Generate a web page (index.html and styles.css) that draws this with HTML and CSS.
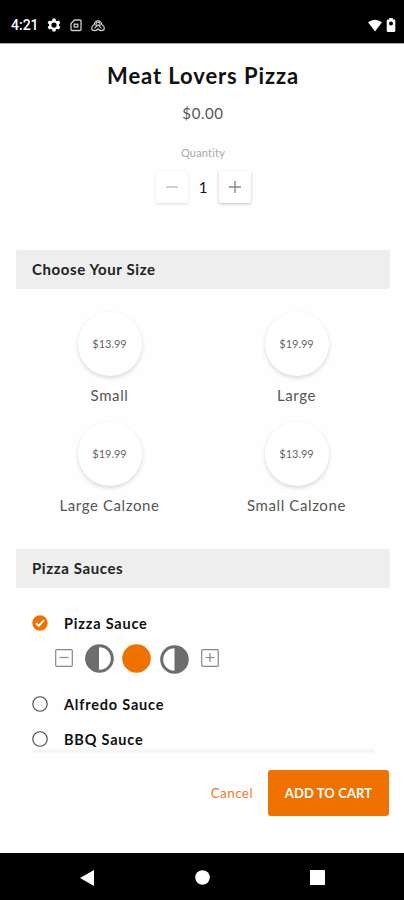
FILE: index.html
```html
<!DOCTYPE html>
<html lang="en">
<head>
    <meta charset="UTF-8">
    <meta name="viewport" content="width=device-width, initial-scale=1.0">
    <title>Meat Lovers Pizza</title>
    <link rel="stylesheet" href="styles.css">
</head>
<body>
    <div class="statusbar">
        <span class="time">4:21</span>
        <svg class="gear" width="14" height="14" viewBox="0 0 24 24"><path fill="#fff" fill-rule="evenodd" d="M9.500 1h5l.6 3.200 2.200 1.300 3.100-1.100 2.500 4.300-2.500 2.100v2.400l2.500 2.100-2.500 4.300-3.100-1.100-2.200 1.300-.6 3.200h-5l-.6-3.200-2.200-1.300-3.100 1.100-2.500-4.300 2.500-2.100v-2.400L1.100 8.700l2.500-4.300 3.100 1.100 2.200-1.300zM12 7.500a4.500 4.500 0 1 0 0 9 4.500 4.500 0 0 0 0-9z"/></svg>
        <svg class="card" width="12" height="13" viewBox="0 0 12 13" fill="none" stroke="#ccc" stroke-width="1.300"><path d="M4.500 1H10q1 0 1 1v8.500q0 1-1 1H2q-1 0-1-1V4.500z"/><rect x="4.200" y="5.200" width="3.600" height="2.800"/></svg>
        <svg class="cast" width="14" height="13" viewBox="0 0 14 13" fill="none" stroke="#ccc" stroke-width="1.200"><path d="M3.300 5.500a3.700 3.700 0 0 1 7.400 0q2.600 1.300 2.600 3.600 0 2.600-2.800 2.600-2 0-3.500-1.700-1.500 1.700-3.500 1.700Q.7 11.700.7 9.100q0-2.300 2.600-3.600z"/><path d="M5 7V5.200a2 2 0 0 1 4 0V7M3.500 9.300L7 5.800l3.500 3.500"/></svg>
        <svg class="wifi" width="16" height="13" viewBox="0 0 16 13"><path fill="#fff" d="M1 3.300Q8-1.800 15 3.300L8 12.500z"/></svg>
        <svg class="battery" width="10" height="14" viewBox="0 0 10 14"><path fill="#fff" fill-rule="evenodd" d="M3.200 0h3.600v1.500H8q1.300 0 1.300 1.300v9.900Q9.300 14 8 14H2Q.7 14 .7 12.700V2.800Q.7 1.500 2 1.500h1.200zM5 3.400a2 2 0 1 0 0 4 2 2 0 0 0 0-4z"/></svg>
    </div>

    <div class="content">
        <h1 class="title">Meat Lovers Pizza</h1>
        <p class="price">$0.00</p>
        <p class="quantity-label">Quantity</p>
        <div class="stepper">
            <button class="step step-off"><svg width="12" height="12" viewBox="0 0 12 12"><path d="M0 6h12"/></svg></button>
            <span class="count">1</span>
            <button class="step"><svg width="12" height="12" viewBox="0 0 12 12"><path d="M0 6h12M6 0v12"/></svg></button>
        </div>

        <h2 class="section">Choose Your Size</h2>
        <div class="sizes">
            <div class="size"><span class="circle">$13.99</span><span class="size-name">Small</span></div>
            <div class="size"><span class="circle">$19.99</span><span class="size-name">Large</span></div>
            <div class="size"><span class="circle">$19.99</span><span class="size-name">Large Calzone</span></div>
            <div class="size"><span class="circle">$13.99</span><span class="size-name">Small Calzone</span></div>
        </div>

        <h2 class="section sauces-head">Pizza Sauces</h2>
        <div class="sauces">
            <div class="sauce">
                <svg width="16" height="16" viewBox="0 0 16 16"><circle cx="8" cy="8" r="7.700" fill="#ef7100"/><path d="M4 8.200l2.800 2.700 5.200-5.700" fill="none" stroke="#fff" stroke-width="2"/></svg>
                <span class="sauce-name">Pizza Sauce</span>
            </div>
            <div class="portions">
                <svg width="18" height="18" viewBox="0 0 18 18"><rect class="box" x=".7" y=".7" width="16.600" height="16.600" rx="1"/><path class="box" d="M4.500 8.500h9"/></svg>
                <svg class="left" width="29" height="29" viewBox="0 0 29 29"><circle cx="14.500" cy="14.500" r="12.800" fill="#fff" stroke="#6d6d6d" stroke-width="3"/><path d="M14 1a13.500 13.500 0 0 0 0 27z" fill="#6d6d6d"/></svg>
                <svg class="whole" width="29" height="29" viewBox="0 0 29 29"><circle cx="14.500" cy="14.500" r="14.300" fill="#ef7100"/></svg>
                <svg class="right" width="29" height="29" viewBox="0 0 29 29"><circle cx="14.500" cy="14.500" r="12.800" fill="#fff" stroke="#6d6d6d" stroke-width="3"/><path d="M14.500 1a13.500 13.500 0 0 1 0 27z" fill="#6d6d6d"/></svg>
                <svg width="18" height="18" viewBox="0 0 18 18"><rect class="box" x=".7" y=".7" width="16.600" height="16.600" rx="1"/><path class="box" d="M4.500 8.500h9M9 4v9"/></svg>
            </div>
            <div class="sauce">
                <svg width="16" height="16" viewBox="0 0 16 16"><circle class="radio" cx="8" cy="8" r="7.200"/></svg>
                <span class="sauce-name">Alfredo Sauce</span>
            </div>
            <div class="sauce">
                <svg width="16" height="16" viewBox="0 0 16 16"><circle class="radio" cx="8" cy="8" r="7.200"/></svg>
                <span class="sauce-name">BBQ Sauce</span>
            </div>
        </div>
    </div>

    <div class="footer">
        <div class="fade"></div>
        <div class="actions">
            <button class="cancel">Cancel</button>
            <button class="add">ADD TO CART</button>
        </div>
    </div>

    <div class="navbar">
        <svg width="14" height="16" viewBox="0 0 14 16"><path fill="#fff" d="M0 8L14 0v16z"/></svg>
        <svg width="15" height="15" viewBox="0 0 15 15"><circle cx="7.500" cy="7.500" r="7.300" fill="#fff"/></svg>
        <svg width="15" height="15" viewBox="0 0 15 15"><rect width="15" height="15" rx=".5" fill="#fff"/></svg>
    </div>
</body>
</html>
```
FILE: styles.css
```css
* {
    box-sizing: border-box;
}
body {
    margin: 0;
    height: 900px;
    display: flex;
    flex-direction: column;
    overflow: hidden;
    background: #fefefe;
    font-family: Lato, "Open Sans", sans-serif;
    color: #111;
}
svg {
    display: block;
    flex: none;
}
button {
    font-family: inherit;
    border: none;
    padding: 0;
    cursor: pointer;
}
.statusbar {
    height: 43px;
    flex: none;
    display: flex;
    align-items: center;
    padding: 7px 8px 0 11px;
    background: #000;
    box-shadow: 0 1px 0 #aaa;
}
.time {
    width: 36px;
    font-family: Roboto, sans-serif;
    font-size: 14px;
    font-weight: 500;
    color: #fff;
}
.card {
    margin-left: 9px;
}
.cast {
    margin-left: 9px;
}
.wifi {
    margin-left: auto;
}
.battery {
    margin-left: 3px;
}
.content {
    height: 706px;
    flex: none;
    padding: 19px 14px 0 16px;
    overflow: hidden;
}
.title {
    margin: 0;
    font-size: 22px;
    line-height: 28px;
    font-weight: 700;
    letter-spacing: 0.9px;
    text-align: center;
}
.price {
    margin: 13px 0 0;
    font-size: 15px;
    line-height: 20px;
    letter-spacing: 0.6px;
    text-align: center;
    color: #555;
}
.quantity-label {
    margin: 22px 0 0;
    font-size: 11px;
    line-height: 16px;
    letter-spacing: 0.2px;
    text-align: center;
    color: #aaa;
}
.stepper {
    display: flex;
    justify-content: center;
    align-items: center;
    margin-top: 10px;
}
.step {
    width: 32px;
    height: 32px;
    display: flex;
    align-items: center;
    justify-content: center;
    background: #fff;
    border-radius: 2px;
    box-shadow: 0 1px 3px rgba(0, 0, 0, 0.25);
}
.step path {
    stroke: #888;
    stroke-width: 1.4;
}
.step-off {
    box-shadow: 0 1px 3px rgba(0, 0, 0, 0.13);
}
.step-off path {
    stroke: #bbb;
}
.count {
    width: 31px;
    font-size: 15px;
    text-align: center;
}
.section {
    height: 39px;
    margin: 47px 0 0;
    padding-left: 16px;
    font-size: 15px;
    line-height: 39px;
    letter-spacing: 0.6px;
    font-weight: 700;
    color: #222;
    background: #eee;
    border-radius: 2px;
}
.sizes {
    display: grid;
    grid-template-columns: 1fr 1fr;
    grid-auto-rows: 110px;
    padding-top: 23px;
}
.size {
    display: flex;
    flex-direction: column;
    align-items: center;
}
.circle {
    width: 64px;
    height: 64px;
    border-radius: 50%;
    background: #fff;
    box-shadow: 0 2px 4px rgba(0, 0, 0, 0.15);
    font-size: 11px;
    line-height: 63px;
    text-align: center;
    color: #666;
}
.size-name {
    margin-top: 9px;
    font-size: 15px;
    line-height: 20px;
    letter-spacing: 0.6px;
    color: #555;
}
.sauces-head {
    margin-top: 17px;
}
.sauces {
    padding: 25px 0 0 16px;
}
.sauce {
    height: 20px;
    display: flex;
    align-items: center;
    gap: 16px;
    margin-bottom: 15px;
}
.sauce-name {
    font-size: 14.5px;
    font-weight: 700;
    letter-spacing: 0.8px;
}
.radio {
    fill: #fff;
    stroke: #444;
    stroke-width: 1.1;
}
.portions {
    display: flex;
    align-items: center;
    height: 30px;
    margin: -5px 0 21px;
    padding-left: 23px;
}
.box {
    fill: none;
    stroke: #888;
    stroke-width: 1.2;
}
.left {
    margin-left: 12px;
}
.whole {
    margin-left: 8px;
}
.right {
    margin: 2px 12px 0 9px;
}
.footer {
    flex: 1;
    display: flex;
    flex-direction: column;
}
.fade {
    height: 5px;
    margin: 0 30px 0 32px;
    background: linear-gradient(#fbfbfb, #f4f4f4 50%, #fefefe);
}
.actions {
    display: flex;
    justify-content: flex-end;
    align-items: center;
    padding: 16px 15px 0 0;
}
.cancel {
    margin-right: 15px;
    background: none;
    font-size: 13.5px;
    letter-spacing: 0.4px;
    color: #ee7a28;
}
.add {
    width: 121px;
    height: 46px;
    border-radius: 3px;
    background: #ef7100;
    font-size: 13px;
    font-weight: 700;
    letter-spacing: 0.1px;
    color: #fff;
}
.navbar {
    height: 47px;
    flex: none;
    display: flex;
    justify-content: space-between;
    align-items: center;
    padding: 2px 79px 0 80px;
    background: #000;
}
```
